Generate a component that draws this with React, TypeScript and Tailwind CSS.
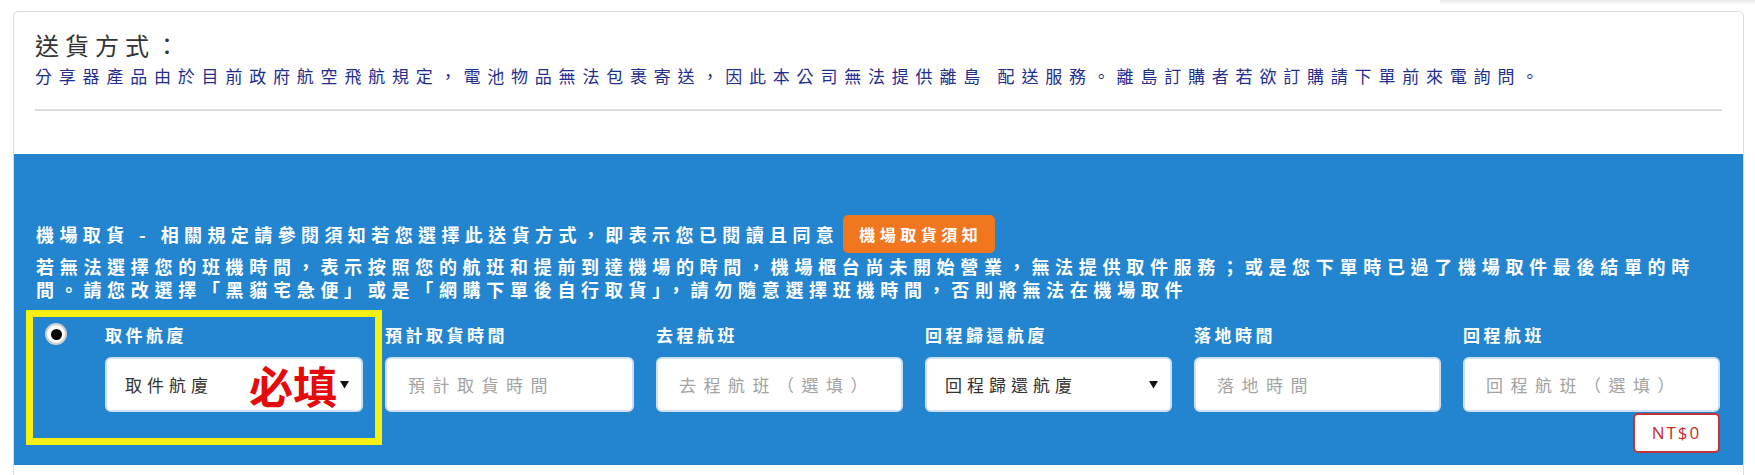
import React from "react";

const cjk = "font-['Noto_Sans_CJK_TC','Noto_Sans',sans-serif]";

function Arrow() {
  return (
    <svg width="9" height="9" viewBox="0 0 9 9" className="shrink-0">
      <polygon points="0,1 9,1 4.5,8.5" fill="#111" />
    </svg>
  );
}

function Field({
  label,
  width,
  placeholder,
  value,
  select,
  children,
}: {
  label: string;
  width: string;
  placeholder?: string;
  value?: string;
  select?: boolean;
  children?: React.ReactNode;
}) {
  return (
    <div className={`flex flex-col ${width}`}>
      <div className="text-[17px] leading-[24px] font-bold tracking-[3.5px] text-white">{label}</div>
      <div className="relative mt-[10px] flex h-[55px] items-center rounded-[6px] border-2 border-[#cfe0f2] bg-white pl-[18px] pr-[12px]">
        {value ? (
          <span className="flex-1 text-[17px] tracking-[5px] text-[#333]">{value}</span>
        ) : (
          <span className="flex-1 pl-[3px] text-[17px] tracking-[7.5px] text-[#a3a3a3]">{placeholder}</span>
        )}
        {select && <Arrow />}
        {children}
      </div>
    </div>
  );
}

export default function App() {
  return (
    <div className={`relative min-h-[475px] bg-white ${cjk}`}>
      <div className="absolute right-0 top-0 h-[5px] w-[315px] bg-gradient-to-b from-[#e9e9e9] to-white" />
      <div className="ml-[13px] mr-[11px] pt-[11px]">
        <div className="overflow-hidden rounded-[5px] border border-[#dcdcdc] bg-white">
          <div className="px-[21px] pb-[43px] pt-[18px]">
            <h2 className="text-[24px] leading-[30px] tracking-[6px] text-[#333]">送貨方式：</h2>
            <p className="mt-[3px] text-[17px] leading-[26px] tracking-[6.8px] text-[#1f2e8f]">
              分享器產品由於目前政府航空飛航規定，電池物品無法包裹寄送，因此本公司無法提供離島 配送服務。離島訂購者若欲訂購請下單前來電詢問。
            </p>
            <div className="mt-[20px] h-[2px] bg-[#dddddd]" />
          </div>

          <div className="bg-[#2385d0] pb-[12px] pl-[22px] pr-[21px] pt-[61px] text-white">
            <div className="flex h-[38px] items-center">
              <span className="text-[18px] leading-[24px] font-bold tracking-[5.4px]">
                機場取貨 - 相關規定請參閱須知若您選擇此送貨方式，即表示您已閱讀且同意
              </span>
              <button className="ml-[4px] h-[38px] rounded-[5px] bg-[#f0761f] pl-[16px] pr-[13px] text-[16px] font-bold tracking-[4.5px] text-white">
                機場取貨須知
              </button>
            </div>
            <p className="mt-[2px] text-[18px] font-bold leading-[23px] tracking-[5.7px]">
              若無法選擇您的班機時間，表示按照您的航班和提前到達機場的時間，機場櫃台尚未開始營業，無法提供取件服務；或是您下單時已過了機場取件最後結單的時
              <br />
              間。請您改選擇「黑貓宅急便」或是「網購下單後自行取貨」，請勿隨意選擇班機時間，否則將無法在機場取件
            </p>

            <div className="relative mt-[22px] flex items-start">
              <div className="pointer-events-none absolute left-[-10px] top-[-13px] h-[135px] w-[356px] border-[7px] border-[#f8ef12]" />
              <div className="ml-[9px] flex h-[22px] w-[22px] items-center justify-center rounded-full border-2 border-[#cfcfcf] bg-white">
                <div className="h-[11px] w-[11px] rounded-full bg-black" />
              </div>
              <div className="ml-[38px] flex gap-[22px]">
                <Field label="取件航廈" width="w-[258px]" value="取件航廈" select>
                  <span className="absolute right-[24px] top-1/2 -translate-y-1/2 text-[44px] font-bold leading-none text-[#e30b0b]">
                    必填
                  </span>
                </Field>
                <Field label="預計取貨時間" width="w-[249px]" placeholder="預計取貨時間" />
                <Field label="去程航班" width="w-[247px]" placeholder="去程航班（選填）" />
                <Field label="回程歸還航廈" width="w-[247px]" value="回程歸還航廈" select />
                <Field label="落地時間" width="w-[247px]" placeholder="落地時間" />
                <div className="flex w-[257px] flex-col">
                  <Field label="回程航班" width="w-[257px]" placeholder="回程航班（選填）" />
                  <div className="mt-[1px] flex justify-end">
                    <div className="flex h-[40px] w-[87px] items-center justify-center rounded-[5px] border-2 border-[#c0353a] bg-white font-['Open_Sans',sans-serif] text-[17px] tracking-[2px] text-[#c62d2d]">
                      NT$0
                    </div>
                  </div>
                </div>
              </div>
            </div>
          </div>
          <div className="h-[30px]" />
        </div>
      </div>
    </div>
  );
}
